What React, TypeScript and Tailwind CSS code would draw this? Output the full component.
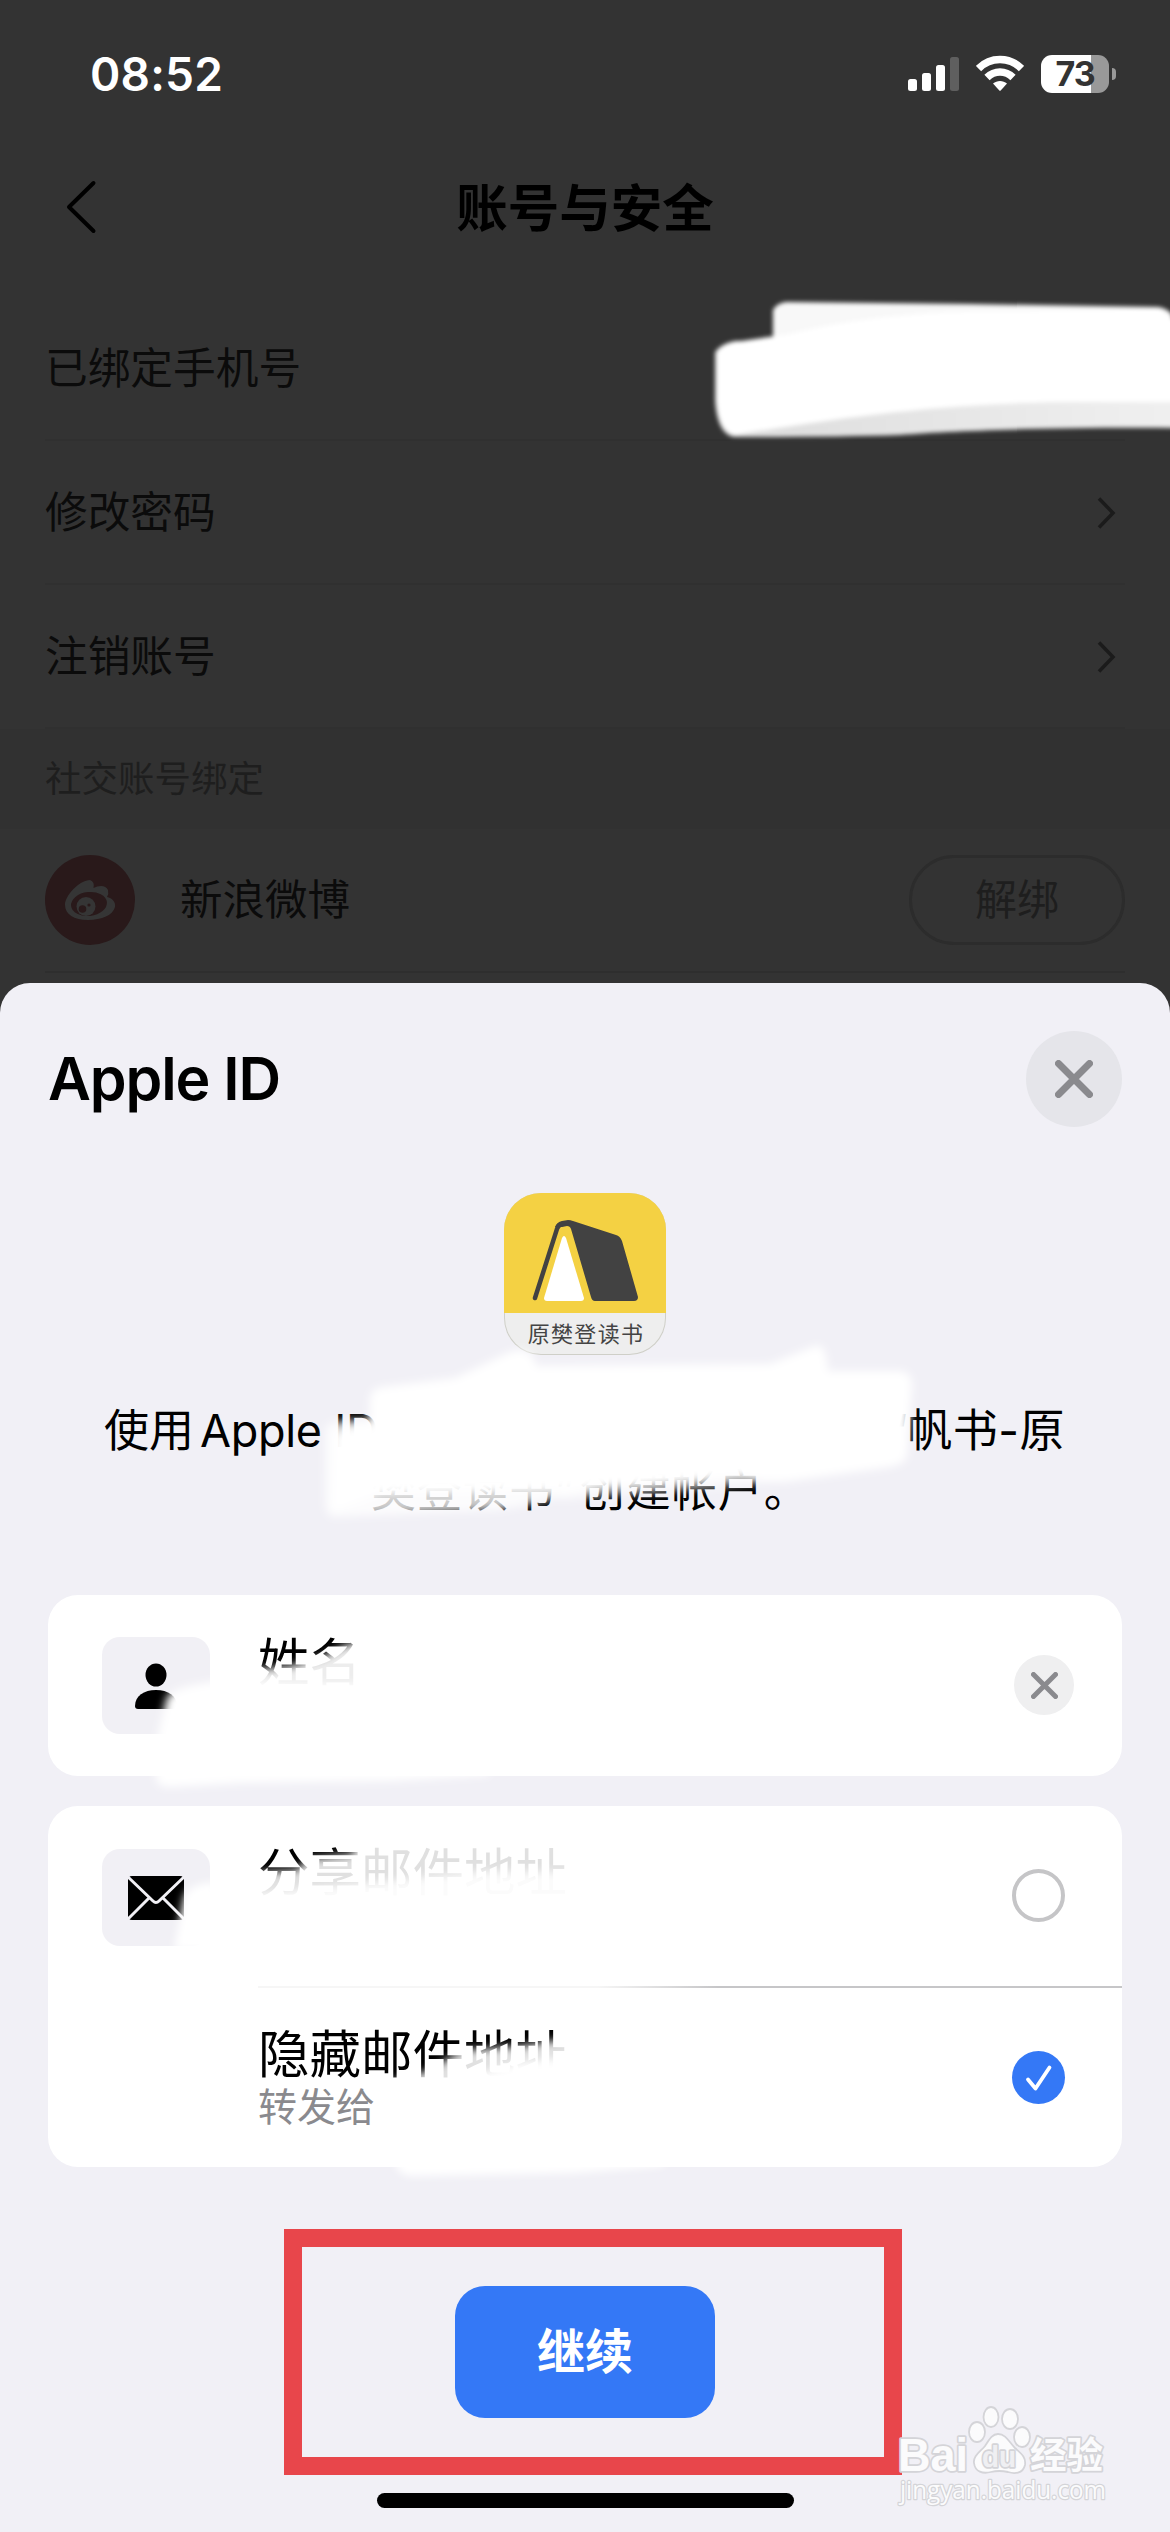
import type { ReactNode } from 'react'
import clsx from 'clsx'

function Cross({ size, width }: { size: number; width: number }) {
    return (
        <svg width={size} height={size} viewBox={`0 0 ${size} ${size}`}>
            <path
                d={`M${width / 2} ${width / 2}L${size - width / 2} ${size - width / 2}M${size - width / 2} ${width / 2}L${width / 2} ${size - width / 2}`}
                stroke="#8a8a8e"
                strokeWidth={width}
                strokeLinecap="round"
            />
        </svg>
    )
}

function StatusBar() {
    return (
        <div className="flex h-[148px] items-center justify-between pl-[90px] pr-[54px]">
            <span className="text-[46px] font-semibold leading-none tracking-[0.2px] text-white">
                08:52
            </span>
            <div className="flex items-center">
                <svg width="52" height="38" viewBox="0 0 52 38" fill="#fff">
                    <rect x="0" y="24" width="9" height="12" rx="2.5" />
                    <rect x="14" y="18" width="9" height="18" rx="2.5" />
                    <rect x="28" y="10" width="9" height="26" rx="2.5" />
                    <rect x="42" y="2" width="9" height="34" rx="2.5" fill="#5f5f5f" />
                </svg>
                <svg
                    className="ml-4"
                    width="48"
                    height="38"
                    viewBox="0 0 48 38"
                    fill="none"
                    stroke="#fff"
                    strokeWidth="7.500"
                >
                    <path d="M2.5 13.5C14.5 1.5 33.500 1.500 45.500 13.500" />
                    <path d="M11 22.500C18.500 15.200 29.500 15.200 37 22.500" />
                    <path
                        d="M17 28.500C21 25 27 25 31 28.500L24.700 35.500Q24 36.200 23.300 35.500Z"
                        fill="#fff"
                        stroke="none"
                    />
                </svg>
                <div className="ml-[17px] flex h-[38px] w-[68px] items-center justify-center overflow-hidden rounded-[11px] bg-[linear-gradient(90deg,#fff_50px,#999_50px)]">
                    <span className="text-[34px] font-bold leading-none tracking-[-1px] text-[#333]">
                        73
                    </span>
                </div>
                <div className="ml-[3px] h-3 w-[4px] rounded-r-full bg-[#999]" />
            </div>
        </div>
    )
}

function SettingsRow({ label, arrow }: { label: string; arrow?: boolean }) {
    return (
        <div className="flex h-[144px] items-center justify-between border-b-2 border-[#303030] pr-[9px] pt-[2px]">
            <span className="text-[42.700px] leading-none text-[#0b0b0b]">{label}</span>
            {arrow && (
                <svg width="20" height="34" viewBox="0 0 20 34" fill="none">
                    <path d="M3 2.500L17 17L3 31.500" stroke="#1b1b1b" strokeWidth="3.500" />
                </svg>
            )}
        </div>
    )
}

function WeiboIcon() {
    return (
        <svg width="90" height="90" viewBox="0 0 90 90">
            <circle cx="45" cy="45" r="45" fill="#29191a" />
            <path
                d="M20 50C20 40 35 25 45 25Q50 27 48.500 33C54 30 61 30 63 35Q64 39 62 42C67 43 71 47 70 52C68 60 57 65 43 65C29 65 20 59 20 50Z"
                fill="#353535"
            />
            <ellipse cx="44" cy="49" rx="18" ry="12" fill="#29191a" transform="rotate(-6 44 49)" />
            <circle cx="41" cy="51.500" r="9.500" fill="#353535" />
            <circle cx="37.500" cy="54" r="3.800" fill="#29191a" />
            <circle cx="44" cy="50" r="1.600" fill="#29191a" />
        </svg>
    )
}

function AppIcon() {
    return (
        <div className="mx-auto flex h-[162px] w-[162px] flex-col overflow-hidden rounded-[37px] bg-[#eee] ring-1 ring-inset ring-[#cfcfc8]">
            <svg width="162" height="120" viewBox="0 0 162 120">
                <rect width="162" height="120" fill="#f4d143" />
                <path
                    d="M31 105L53 36Q54 32 58 31L66 30"
                    fill="none"
                    stroke="#424242"
                    strokeWidth="4.500"
                    strokeLinecap="round"
                />
                <path
                    d="M51 34Q53 29 58 28L64 27Q66 27 69 28L112 42Q116 43 118 48L134 104Q134 108 130 108H91Q88 108 87 104L67 36Q66 33 63 33L58 34Z"
                    fill="#424242"
                />
                <path
                    d="M58 45Q60 41 62 45L80 105Q80 108 77 108H43Q40 108 40 105Z"
                    fill="#fff"
                />
            </svg>
            <div className="flex flex-1 justify-center pl-[2px] pt-[9px] text-[22px] leading-[24px] tracking-[1.3px] text-[#444]">
                原樊登读书
            </div>
        </div>
    )
}

function IconBox({ children }: { children: ReactNode }) {
    return (
        <div className="flex h-[97px] w-[108px] shrink-0 items-center justify-center rounded-[18px] bg-[#f1f0f5]">
            {children}
        </div>
    )
}

function Radio({ checked }: { checked?: boolean }) {
    return (
        <div
            className={clsx(
                'flex h-[53px] w-[53px] items-center justify-center rounded-full',
                checked ? 'bg-[#3478f6]' : 'border-4 border-[#c5c5c7]',
            )}
        >
            {checked && (
                <svg width="28" height="28" viewBox="0 0 28 28" fill="none">
                    <path
                        d="M3 15.500L10.500 24.500L24.500 3.500"
                        stroke="#fff"
                        strokeWidth="3.800"
                        strokeLinecap="round"
                        strokeLinejoin="round"
                    />
                </svg>
            )}
        </div>
    )
}

// White brush strokes that hide the private parts of the screen
function BrushStrokes() {
    return (
        <svg
            className="pointer-events-none absolute left-0 top-0"
            width="1170"
            height="2532"
            viewBox="0 0 1170 2532"
            fill="#fff"
        >
            <defs>
                <filter id="soft" x="-10%" y="-20%" width="120%" height="140%">
                    <feGaussianBlur stdDeviation="2.2" />
                </filter>
                <filter id="softer" x="-10%" y="-20%" width="120%" height="140%">
                    <feGaussianBlur stdDeviation="4" />
                </filter>
                <linearGradient id="band" x1="0" x2="1" y1="0" y2="0">
                    <stop offset="0" stopColor="#dcdcdc" />
                    <stop offset="1" stopColor="#f0f0f0" />
                </linearGradient>
            </defs>

            {/* phone number */}
            <g filter="url(#soft)">
                <path
                    d="M735 437C722 436 716 420 715 400V352Q720 344 735 341H1180V428C1070 427 960 430 900 435Q840 437 735 437Z"
                    fill="url(#band)"
                />
                <path d="M773 345V310Q777 303 786 302L970 304L1158 307Q1166 308 1172 314V350Z" fill="#f8f8f8" />
                <path d="M735 435C723 432 718 418 717 400V353Q720 345 735 342L790 334C850 318 930 311 1000 311L1160 309L1175 320V402H1060C950 404 860 414 735 435Z" />
            </g>

            {/* account sentence */}
            <g filter="url(#softer)">
                <path d="M370 1400Q370 1389 382 1387L455 1378L510 1352Q532 1345 536 1366L770 1364L815 1346Q826 1342 828 1371L900 1371Q911 1372 912 1384L907 1456Q905 1464 890 1467L783 1482L740 1477L640 1486L560 1488L368 1484Z" />
                <path d="M325 1430Q326 1422 345 1420L640 1416V1484C600 1484 560 1500 500 1510L335 1517Q325 1517 325 1500Z" opacity="0.8" />
                <path d="M334 1434L350 1426H640V1484L560 1490L380 1494L332 1512Z" />
                <path d="M560 1460H780V1482L690 1490L560 1500Z" opacity="0.6" />
            </g>

            {/* name */}
            <g filter="url(#softer)">
                <path d="M220 1681Q175 1686 167 1697L158 1735L156 1776Q156 1788 172 1787L243 1783L391 1781L489 1775V1690Z" />
                <path d="M250 1670L290 1666L325 1656L345 1645L370 1638V1720H250Z" opacity="0.93" />
                <path d="M250 1684H370V1720H250Z" />
            </g>

            {/* mail addresses */}
            <g filter="url(#softer)">
                <path d="M215 1882Q188 1884 184 1898L174 1950H225Z" />
                <path d="M250 1873L296 1870L308 1859L352 1854L358 1836H580V1920H250Z" opacity="0.88" />
                <path d="M250 1894L400 1880L480 1872H580V1920H250Z" opacity="0.85" />
                <path d="M385 2083L430 2070L462 2050L520 2046L580 2036V2095L420 2100Z" opacity="0.88" />
                <path d="M470 2076L520 2062L580 2056V2095H470Z" />
                <path d="M394 2160Q398 2176 412 2176L573 2173L664 2166V2150H394Z" />
            </g>
        </svg>
    )
}

function Watermark() {
    return (
        <svg
            className="absolute left-[896px] top-[2402px]"
            width="226"
            height="122"
            viewBox="0 0 226 122"
            fill="#fbfbfc"
            stroke="#d4d4d8"
            strokeWidth="1.800"
        >
            <ellipse cx="81" cy="30" rx="8" ry="10" />
            <ellipse cx="95" cy="15" rx="7.500" ry="10" />
            <ellipse cx="114" cy="17" rx="8" ry="10" />
            <ellipse cx="126" cy="35" rx="8" ry="10" />
            <path d="M102 32C110 32 113 40 119 46C127 53 130 56 129 63C127 72 118 72 112 70Q103 68 95 70C87 72 79 70 78 61C77 54 84 50 89 44C93 38 96 32 102 32Z" />
            <g strokeWidth="3.500" strokeLinejoin="round" className="[paint-order:stroke_fill]">
                <text
                    x="2"
                    y="69"
                    fontSize="46"
                    fontWeight="700"
                    textLength="70"
                    lengthAdjust="spacingAndGlyphs"
                    fontFamily="Liberation Sans, sans-serif"
                >
                    Bai
                </text>
                <text
                    x="86"
                    y="65"
                    fontSize="30"
                    fontWeight="600"
                    textLength="34"
                    lengthAdjust="spacingAndGlyphs"
                    fill="#efeff2"
                    fontFamily="Liberation Sans, sans-serif"
                >
                    du
                </text>
                <text
                    x="134"
                    y="67"
                    fontSize="37"
                    fontWeight="700"
                    textLength="73"
                    lengthAdjust="spacingAndGlyphs"
                    fontFamily="Noto Sans CJK SC, sans-serif"
                >
                    经验
                </text>
                <text
                    x="4"
                    y="97"
                    fontSize="25"
                    textLength="206"
                    lengthAdjust="spacingAndGlyphs"
                    strokeWidth="2.500"
                    fontFamily="Open Sans, sans-serif"
                >
                    jingyan.baidu.com
                </text>
            </g>
        </svg>
    )
}

export default function App() {
    return (
        <div className="relative flex h-[2532px] w-[1170px] flex-col overflow-hidden bg-[#333] font-['Inter','Noto_Sans_CJK_SC',sans-serif]">
            <StatusBar />

            <header className="grid h-[149px] grid-cols-[1fr_auto_1fr] items-start px-[65px]">
                <svg className="mt-[32px]" width="32" height="54" viewBox="0 0 32 54" fill="none">
                    <path
                        d="M28.500 3L4 27L28.500 51"
                        stroke="#000"
                        strokeWidth="4"
                        strokeLinecap="round"
                        strokeLinejoin="round"
                    />
                </svg>
                <h1 className="mt-[34px] text-[51.500px] font-bold leading-[52px] text-black">
                    账号与安全
                </h1>
            </header>

            <div className="px-[45px]">
                <SettingsRow label="已绑定手机号" />
                <SettingsRow label="修改密码" arrow />
                <SettingsRow label="注销账号" arrow />
            </div>

            <div className="flex h-[100px] items-center bg-[#313131] px-[45px] text-[36.500px] leading-none text-[#1e1e1e]">
                社交账号绑定
            </div>

            <div className="mx-[45px] flex h-[144px] shrink-0 items-center border-b-2 border-[#2e2e2e]">
                <WeiboIcon />
                <span className="ml-[45px] flex-1 text-[42.500px] leading-none text-[#0b0b0b]">
                    新浪微博
                </span>
                <button className="h-[90px] w-[216px] rounded-full border-[3px] border-[#2c2c2c] text-[42px] leading-none text-[#1e1e1e]">
                    解绑
                </button>
            </div>

            <main className="mt-[10px] flex flex-1 flex-col rounded-t-[30px] bg-[#f1f0f6] px-12">
                <div className="mt-12 flex h-24 items-center justify-between">
                    <h2 className="-mt-0.5 text-[59px] font-semibold leading-none tracking-[-1.100px] text-black">
                        Apple ID
                    </h2>
                    <button className="flex h-24 w-24 items-center justify-center rounded-full bg-[#e5e5ea]">
                        <Cross size={38} width={7} />
                    </button>
                </div>

                <div className="mt-[66px]">
                    <AppIcon />
                </div>

                <div className="mt-[46px] h-[119px] text-[45px] leading-[60px] text-black">
                    <div className="flex justify-between pl-[56px] pr-[57px]">
                        <span>
                            使用<span className="ml-1.5 tracking-[-0.3px]">Apple ID</span>
                        </span>
                        <span>
                            为“<span className="tracking-[0.5px]">帆书-原</span>
                        </span>
                    </div>
                    <div className="pl-[323px] tracking-[1px]">
                        樊登读书”<span className="ml-1">创建帐户。</span>
                    </div>
                </div>

                <section className="mt-[75px] flex h-[181px] items-start rounded-[30px] bg-white pl-[54px] pr-12 pt-[42px]">
                    <IconBox>
                        <svg width="44" height="50" viewBox="0 0 44 50">
                            <ellipse cx="22" cy="14" rx="10.500" ry="11.500" />
                            <path d="M1 45C1 35 10 29 22 29S43 35 43 45Q43 48 40 48H4Q1 48 1 45Z" />
                        </svg>
                    </IconBox>
                    <span className="-mt-px ml-12 flex-1 text-[51.500px] leading-[52px] text-black">
                        姓名
                    </span>
                    <button className="mt-[18px] flex h-[60px] w-[60px] items-center justify-center rounded-full bg-[#efeff0]">
                        <Cross size={27} width={5} />
                    </button>
                </section>

                <section className="mt-[30px] h-[361px] rounded-[30px] bg-white">
                    <div className="flex h-[180px] items-start pl-[54px] pr-[57px] pt-[43px]">
                        <IconBox>
                            <svg width="58" height="46" viewBox="0 0 58 46">
                                <rect x="1" y="1" width="56" height="44" rx="4" />
                                <path
                                    d="M1 2L26 26Q29 29 32 26L57 2M1 44L22 23M57 44L36 23"
                                    fill="none"
                                    stroke="#f1f0f5"
                                    strokeWidth="3"
                                />
                            </svg>
                        </IconBox>
                        <span className="-mt-[3px] ml-12 flex-1 text-[51.500px] leading-[52px] text-black">
                            分享邮件地址
                        </span>
                        <div className="mt-5">
                            <Radio />
                        </div>
                    </div>
                    <div className="ml-[210px] h-[2px] bg-[linear-gradient(90deg,#f6f6f6_340px,#c6c6c8_460px)]" />
                    <div className="flex h-[179px] items-center justify-between pl-[210px] pr-[57px]">
                        <div className="pt-[2px]">
                            <div className="text-[51.500px] leading-[56px] text-black">
                                隐藏邮件地址
                            </div>
                            <div className="text-[39px] leading-[50px] text-[#8a8a8e]">
                                转发给
                            </div>
                        </div>
                        <Radio checked />
                    </div>
                </section>

                <div className="ml-[236px] mt-[62px] flex h-[246px] w-[618px] shrink-0 items-center border-[18px] border-[#e8464b] pl-[153px]">
                    <button className="h-[132px] w-[260px] rounded-[30px] bg-[#3478f6] text-[48px] font-bold leading-none text-white">
                        继续
                    </button>
                </div>

                <div className="ml-[329px] mt-[18px] h-[15px] w-[417px] rounded-full bg-black" />
            </main>

            <BrushStrokes />
            <Watermark />
        </div>
    )
}
